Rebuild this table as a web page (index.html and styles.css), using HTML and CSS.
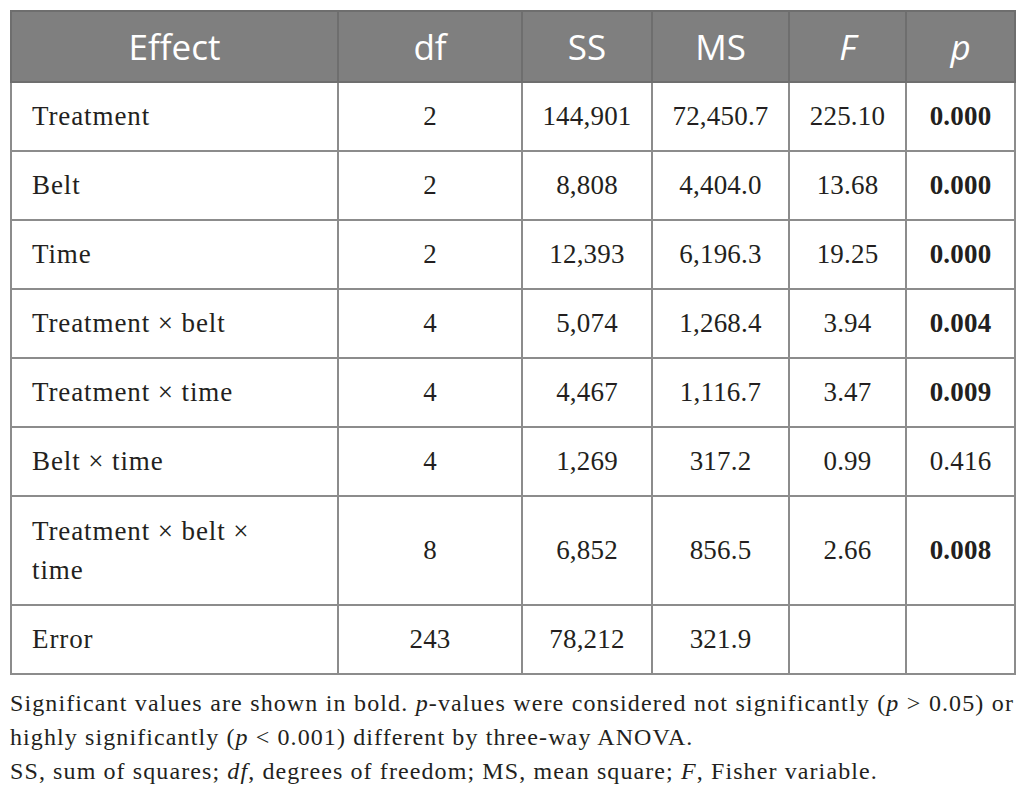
FILE: index.html
```html
<!DOCTYPE html>
<html lang="en">
  <head>
    <meta charset="UTF-8" />
    <meta name="viewport" content="width=device-width, initial-scale=1.0" />
    <title>Three-way ANOVA</title>
    <link rel="stylesheet" href="styles.css">
  </head>
  <body>
    <div class="tableBox">
      <table class="anova">
        <colgroup>
          <col class="colEffect" />
          <col class="colDf" />
          <col class="colSs" />
          <col class="colMs" />
          <col class="colF" />
          <col class="colP" />
        </colgroup>
        <thead>
          <tr>
            <th>Effect</th>
            <th>df</th>
            <th>SS</th>
            <th>MS</th>
            <th><i>F</i></th>
            <th><i>p</i></th>
          </tr>
        </thead>
        <tbody>
          <tr>
            <td class="name">Treatment</td>
            <td>2</td>
            <td>144,901</td>
            <td>72,450.7</td>
            <td>225.10</td>
            <td><b>0.000</b></td>
          </tr>
          <tr>
            <td class="name">Belt</td>
            <td>2</td>
            <td>8,808</td>
            <td>4,404.0</td>
            <td>13.68</td>
            <td><b>0.000</b></td>
          </tr>
          <tr>
            <td class="name">Time</td>
            <td>2</td>
            <td>12,393</td>
            <td>6,196.3</td>
            <td>19.25</td>
            <td><b>0.000</b></td>
          </tr>
          <tr>
            <td class="name">Treatment × belt</td>
            <td>4</td>
            <td>5,074</td>
            <td>1,268.4</td>
            <td>3.94</td>
            <td><b>0.004</b></td>
          </tr>
          <tr>
            <td class="name">Treatment × time</td>
            <td>4</td>
            <td>4,467</td>
            <td>1,116.7</td>
            <td>3.47</td>
            <td><b>0.009</b></td>
          </tr>
          <tr>
            <td class="name">Belt × time</td>
            <td>4</td>
            <td>1,269</td>
            <td>317.2</td>
            <td>0.99</td>
            <td>0.416</td>
          </tr>
          <tr class="tall">
            <td class="name">Treatment × belt ×<br />time</td>
            <td>8</td>
            <td>6,852</td>
            <td>856.5</td>
            <td>2.66</td>
            <td><b>0.008</b></td>
          </tr>
          <tr>
            <td class="name">Error</td>
            <td>243</td>
            <td>78,212</td>
            <td>321.9</td>
            <td></td>
            <td></td>
          </tr>
        </tbody>
      </table>
      <div class="notes">
        <p>
          Significant values are shown in bold. <i>p</i>-values were considered
          not significantly (<i>p</i> &gt; 0.05) or highly significantly
          (<i>p</i> &lt; 0.001) different by three-way ANOVA.
        </p>
        <p>
          SS, sum of squares; <i>df</i>, degrees of freedom; MS, mean square;
          <i>F</i>, Fisher variable.
        </p>
      </div>
    </div>
  </body>
</html>
```

FILE: styles.css
```css
body {
  margin: 0;
  background-color: white;
  font-family: "Liberation Serif", "DejaVu Serif", serif;
  color: #231f20;
}
.tableBox {
  padding: 10px 11px 0 10px;
}
.anova {
  border-collapse: collapse;
  table-layout: fixed;
  width: 1004px;
}
.colEffect {
  width: 327px;
}
.colDf {
  width: 184px;
}
.colSs {
  width: 130px;
}
.colMs {
  width: 137px;
}
.colF {
  width: 117px;
}
.colP {
  width: 109px;
}
th,
td {
  border: 2px solid #8c8c8c;
  padding: 0;
}
th {
  height: 69px;
  background-color: #7f7f7f;
  border-color: #6e6e6e;
  color: white;
  font-family: "Open Sans", "Noto Sans", sans-serif;
  font-weight: 400;
  font-size: 35px;
}
th i {
  font-style: italic;
}
td {
  height: 67px;
  text-align: center;
  font-size: 27px;
  line-height: 39px;
  letter-spacing: 0.2px;
}
td.name {
  text-align: left;
  padding-left: 20px;
  letter-spacing: 0.9px;
}
.tall td {
  height: 107px;
}
td b {
  font-weight: 700;
}
.notes {
  width: 1004px;
  margin-top: 11px;
  font-size: 24px;
  line-height: 34px;
  letter-spacing: 1.1px;
  text-align: justify;
}
.notes p {
  margin: 0;
}
```
